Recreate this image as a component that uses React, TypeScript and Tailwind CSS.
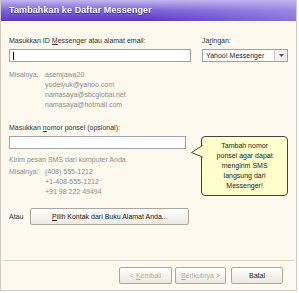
import React from 'react';

const Btn: React.FC<{ children: React.ReactNode; disabled?: boolean; className?: string }> = ({ children, disabled, className }) => (
  <button
    className={`h-[17px] rounded-[2px] border border-[#a9a69c] bg-gradient-to-b from-white to-[#ece9e0] text-[7px] leading-none
      ${disabled ? 'text-[#b0ada4]' : 'text-[#222]'} ${className ?? ''}`}
  >
    {children}
  </button>
);

const Example: React.FC<{ lines: string[] }> = ({ lines }) => (
  <div className="flex text-[#8c8c8c]">
    <span className="w-[36px]">Misalnya:</span>
    <div className="flex flex-col gap-[1px]">
      {lines.map((l) => (
        <span key={l}>{l}</span>
      ))}
    </div>
  </div>
);

export default function App() {
  return (
    <div className="w-[299px] h-[293px] bg-white font-['Liberation_Sans',Arial,sans-serif] text-[7px] leading-[9px] text-[#333]">
      <div className="w-[297px] h-[291px] bg-[#fdf9ef] border-x border-b border-[#cfcabd] flex flex-col">
        {/* title bar */}
        <div className="h-[21px] relative bg-gradient-to-b from-[#c4b6ee] via-[#7d62d8] to-[#5a36c6] flex items-center px-[8px]">
          <div className="absolute inset-0 bg-gradient-to-r from-transparent via-transparent to-[#b9aef0]/50" />
          <span className="relative text-white font-bold text-[9px] tracking-[0.1px] drop-shadow-[0_1px_0_rgba(40,20,100,0.6)]">
            Tambahkan ke Daftar Messenger
          </span>
        </div>

        <div className="flex-1 flex flex-col px-[8px] pt-[15px]">
          {/* id row */}
          <div className="flex gap-[11px]">
            <div className="w-[184px] flex flex-col">
              <span>
                Masukkan ID <span className="underline">M</span>essenger atau alamat email:
              </span>
              <div className="mt-[4px] h-[13px] bg-white border border-[#9ea3a8] flex items-center pl-[3px]">
                <span className="w-px h-[8px] bg-black" />
              </div>
            </div>
            <div className="flex flex-col">
              <span>
                Ja<span className="underline">r</span>ingan:
              </span>
              <div className="mt-[4px] w-[86px] h-[13px] bg-white border border-[#9ea3a8] flex items-center">
                <span className="flex-1 pl-[3px] text-[#222]">Yahoo! Messenger</span>
                <span className="w-[13px] h-full border-l border-[#c9c9c9] bg-[#f0f0ee] flex items-center justify-center">
                  <svg width="5" height="3" viewBox="0 0 5 3">
                    <path d="M0 0h5L2.5 3z" fill="#555" />
                  </svg>
                </span>
              </div>
            </div>
          </div>

          <div className="mt-[8px]">
            <Example lines={['asemjawa20', 'yodelyuk@yahoo.com', 'namasaya@sbcglobal.net', 'namasaya@hotmail.com']} />
          </div>

          {/* phone */}
          <span className="mt-[14px]">
            Masukkan <span className="underline">n</span>omor ponsel (opsional):
          </span>
          <div className="mt-[4px] flex">
            <div className="w-[184px] flex flex-col">
              <div className="h-[13px] bg-white border border-[#9ea3a8]" />
              <span className="mt-[6px] text-[#8c8c8c]">Kirim pesan SMS dari komputer Anda.</span>
              <div className="mt-[3px]">
                <Example lines={['(408) 555-1212', '+1-408-555-1212', '+91 98 222 49494']} />
              </div>
            </div>
            <div className="relative ml-[15px] w-[90px] h-[60px] bg-[#ffffcc] border border-[#444] rounded-[4px] flex flex-col items-center justify-center text-center leading-[10px] text-[#222]">
              <svg className="absolute left-[-11px] top-[8px]" width="12" height="14" viewBox="0 0 12 14">
                <path d="M11.5 0.5L0.5 7.5L11.5 12" fill="#ffffcc" stroke="#444" strokeWidth="1" />
              </svg>
              <span>Tambah nomor</span>
              <span>ponsel agar dapat</span>
              <span>mengirim SMS</span>
              <span>langsung dari</span>
              <span>Messenger!</span>
            </div>
          </div>

          {/* address book */}
          <div className="mt-[12px] flex items-center gap-[7px]">
            <span>Atau</span>
            <Btn className="w-[159px]">
              <span className="underline">P</span>ilih Kontak dari Buku Alamat Anda...
            </Btn>
          </div>

          <div className="flex-1" />
        </div>

        <div className="mx-[2px] h-[2px] border-t border-[#d8d4c8] bg-[#fff]" />
        <div className="h-[28px] flex items-center justify-end pr-[13px] pb-[2px]">
          <Btn disabled className="w-[53px]">
            &lt; <span className="underline">K</span>embali
          </Btn>
          <Btn disabled className="ml-[3px] w-[51px]">
            <span className="underline">B</span>erikutnya &gt;
          </Btn>
          <Btn className="ml-[5px] w-[52px]">Batal</Btn>
        </div>
      </div>
    </div>
  );
}
